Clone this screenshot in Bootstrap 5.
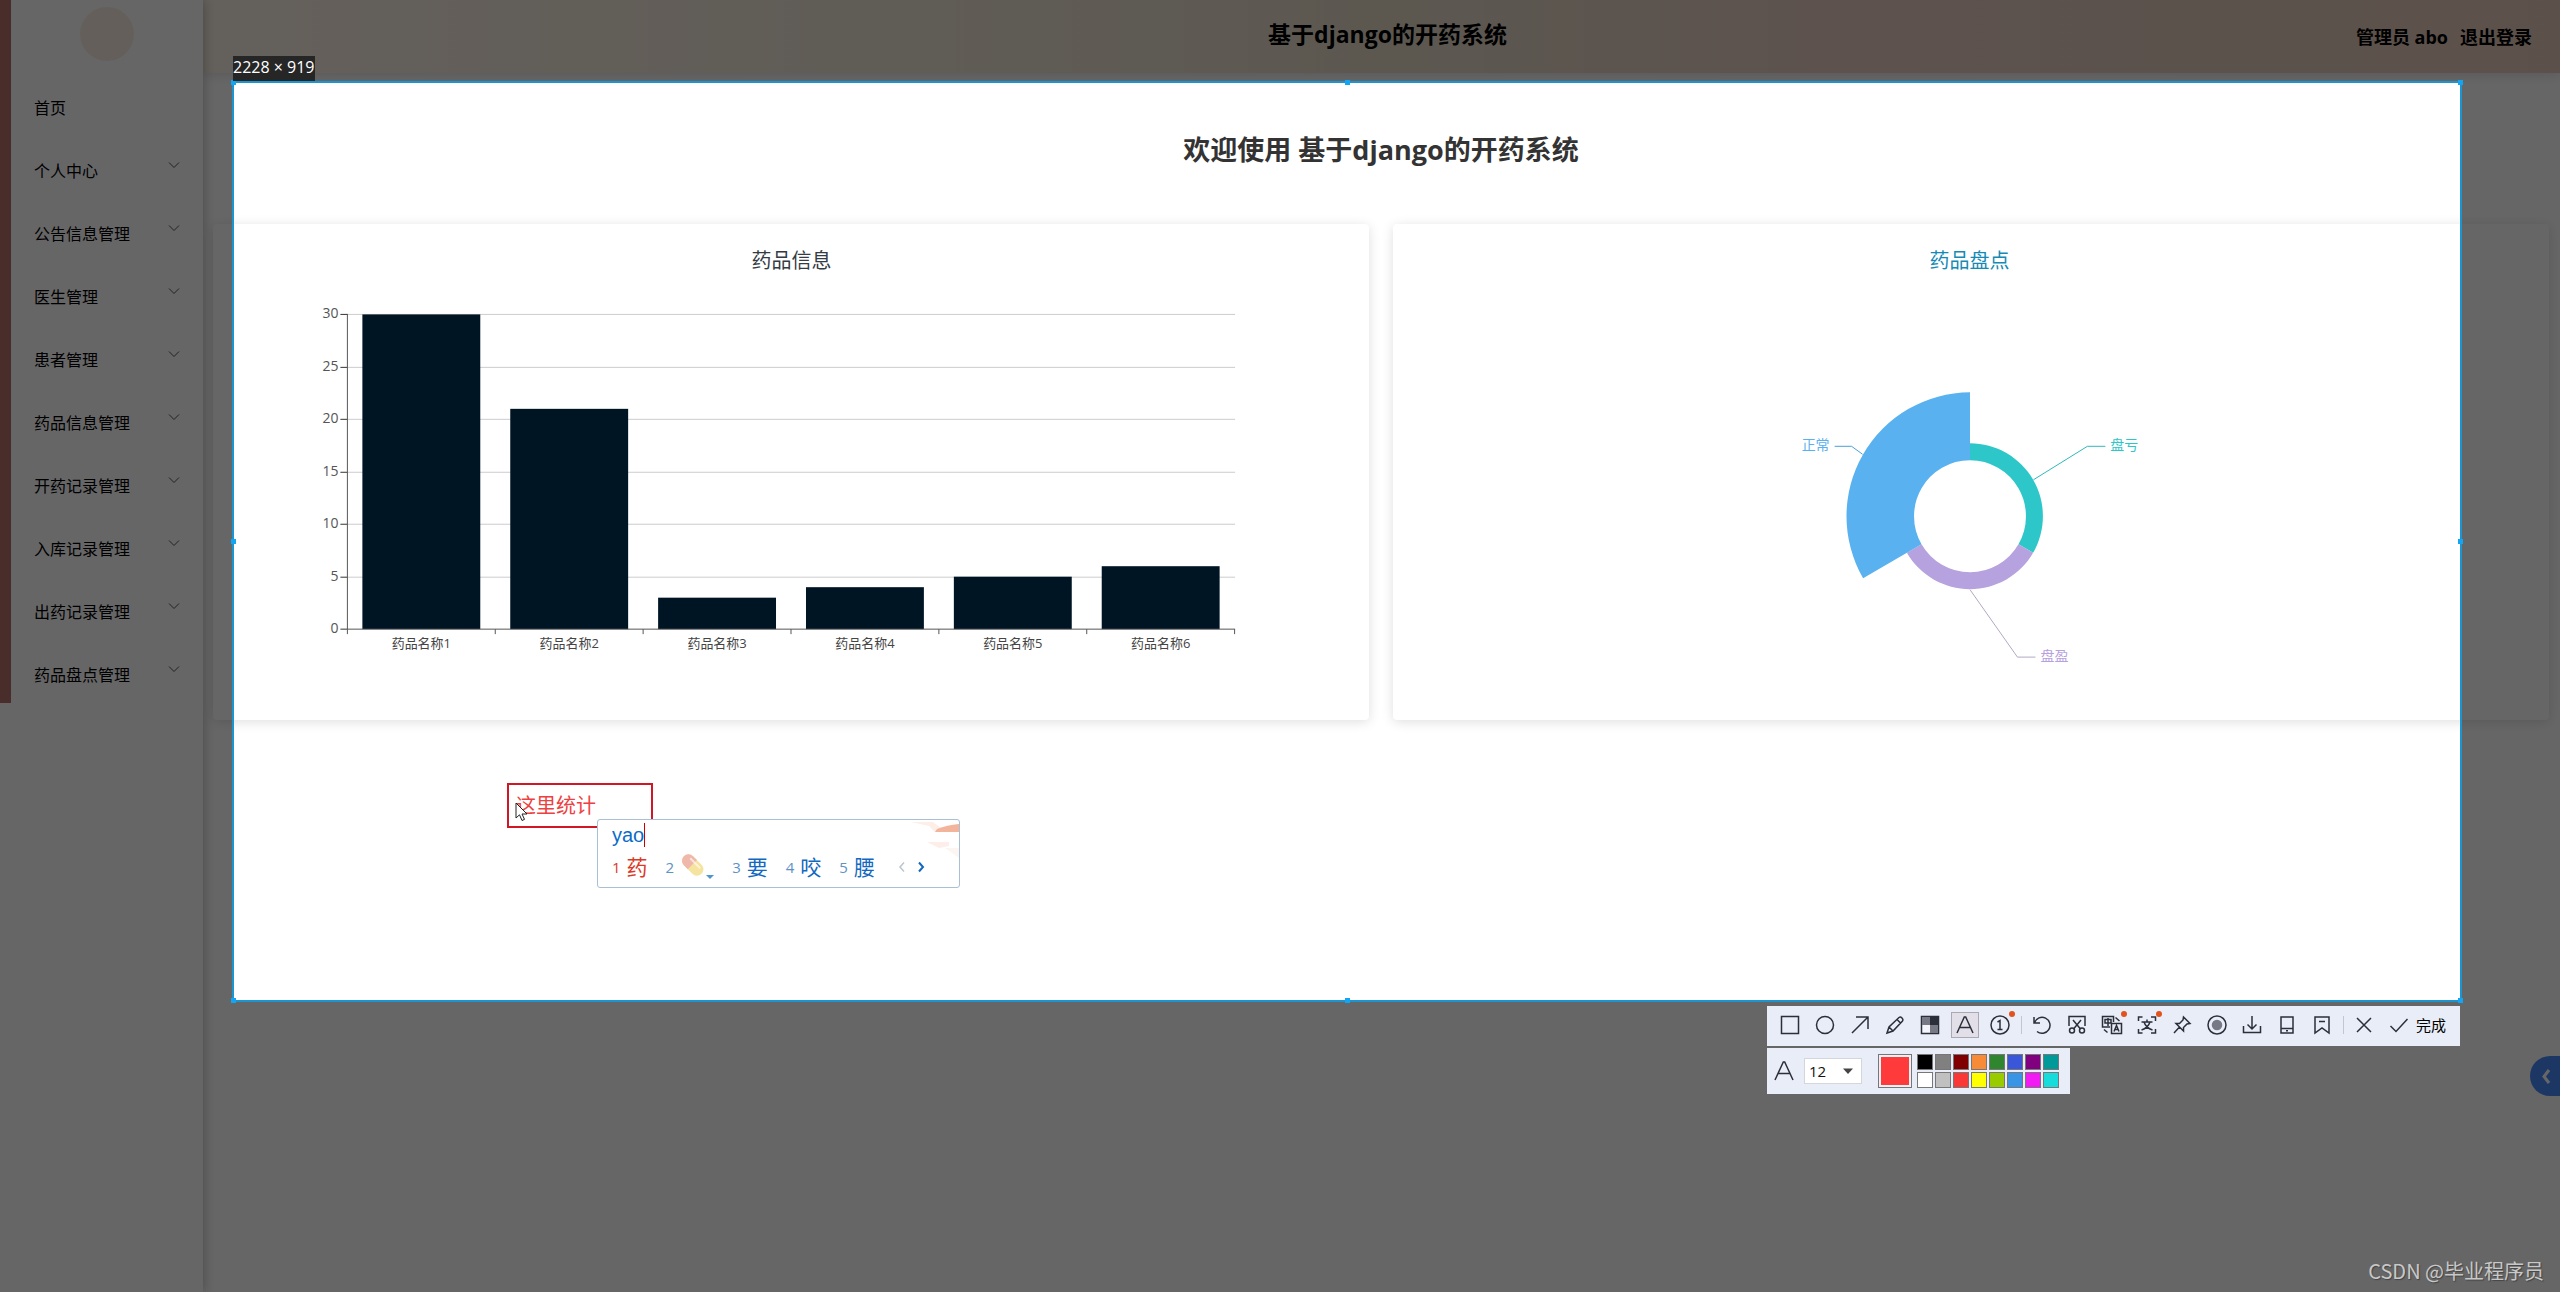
<!DOCTYPE html>
<html lang="zh-CN">
<head>
<meta charset="utf-8">
<meta name="viewport" content="width=device-width, initial-scale=1">
<title>基于django的开药系统</title>
<link rel="stylesheet" href="https://cdn.jsdelivr.net/npm/bootstrap@5.3.0/dist/css/bootstrap.min.css">
<style>
:root{--ink:#2b2f3a;--panel:#e9edf7;--pick:#1c94d2}
body{font-family:"Open Sans","Noto Sans CJK SC",sans-serif;font-size:16px;color:#000;background:#fff;overflow-x:hidden}
svg{display:block}
svg text{font-family:"Open Sans","Noto Sans CJK SC",sans-serif}
.app-shell{min-height:100vh}
.side-panel{width:203px;box-shadow:2px 0 10px rgba(0,0,0,.22);z-index:2}
.side-list{border-left:11px solid #b4726c}
.avatar-box{height:73px;padding-top:7px;margin-left:-1px}
.avatar-dot{width:54px;height:54px;background:#faeee4}
.side-link{height:63px;padding:6px 22px 0 23px;color:#000;text-decoration:none}
.side-link svg{margin-bottom:12px}
.top-bar{height:73px;padding:0 28px;background:linear-gradient(90deg,#fbf0e4 0,#ece2d2 40%,#e6dcc8 50%,#e8cec4 68%,#e6cbba 100%);box-shadow:0 1px 12px rgba(0,0,0,.15)}
.top-title{font-size:23px;line-height:32px;font-weight:700;padding-bottom:5px;padding-left:12px}
.top-user{font-size:18px;font-weight:700;line-height:28px}
.top-user a{color:#000;text-decoration:none}
.work-area{padding:57px 11px 0 10px}
.welcome-title{font-size:27px;font-weight:700;line-height:40px;color:#333;margin-bottom:54px}
.chart-card{border:0;border-radius:4px;box-shadow:0 2px 12px rgba(0,0,0,.13)}
.side-tab{position:absolute;right:0;top:1056px;width:30px;height:40px;border:0;border-radius:20px 0 0 20px;background:#4a8afc;padding:0 0 0 6px}
/* capture overlay */
.capture-box{position:absolute;left:233px;right:99px;top:82px;height:919px;outline:2px solid var(--pick);outline-offset:-1px;box-shadow:0 0 0 4000px rgba(0,0,0,.6);z-index:5}
.grip{position:absolute;width:5px;height:5px;background:#12a5f4}
.g-l{left:-2px}.g-r{right:-2px}.g-t{top:-2px}.g-b{bottom:-2px}
.g-x{left:0;right:0;margin:0 auto}.g-y{top:0;bottom:0;margin:auto 0}
.size-tag{position:absolute;left:0;bottom:100%;margin-bottom:1px;height:25px;line-height:22px;background:#262626;color:#fff;font-size:16px;white-space:nowrap}
.note-box{position:absolute;left:274px;top:701px;width:146px;height:45px;border:2px solid #cf1726}
.note-box input{width:100%;height:39px;border:0;padding:0 0 0 7px;background:transparent;color:#ee3f41;font-size:20px;outline:0}
.pointer{position:absolute;left:282px;top:720px}
.ime-box{position:absolute;left:364px;top:737px;width:363px;height:69px;background:#fff;border:1px solid #a9bfd4;border-radius:3px;padding:0 0 0 14px;font-size:21px;line-height:30px;color:#0a6cc8;overflow:hidden}
.ime-typed{font-family:"Liberation Sans",sans-serif;font-size:20px}
.ime-caret{width:1px;height:24px;background:#c00}
.ime-row{gap:18px;height:34px}
.ime-row button,.tool-strip button,.swatch-grid button{border:0;background:none;padding:0}
.ime-row button{color:#1268c0;display:flex;align-items:center;gap:6px}
.ime-row small{font-size:15px;color:#5d92c8}
.ime-row .first-pick,.ime-row .first-pick small{color:#dc3a28}
.ime-row .page-prev{margin-left:5px}
.ime-row .page-next{margin-left:-7px}
.ime-art{position:absolute;right:0;top:0}
.tool-dock{position:absolute;right:1px;top:100%;margin-top:5px;width:693px}
.tool-strip{height:40px;background:var(--panel);padding:0 14px 2px 9px}
.tool-strip button{width:28px;height:26px;position:relative;margin-right:7px;display:flex;align-items:center;justify-content:center;flex:none}
.tool-strip button.picked{background:#e2dfe8;border:1px solid #aaa9b2}
.tool-strip svg,.letter-a{fill:none;stroke:var(--ink);stroke-width:1.5}
.tool-strip button.has-dot::after{content:"";position:absolute;right:-1px;top:-1px;width:6px;height:6px;border-radius:50%;background:#e2521c}
.bar-rule{width:1px;height:18px;background:#c3c6d0;margin-right:6px;flex:none}
.tool-strip .done-btn{width:auto;gap:7px;margin:0 0 0 4px;font-size:15px;color:#000}
.style-strip{width:303px;height:46px;margin-top:2px;background:var(--panel);padding-left:7px}
.size-pick{width:58px;height:26px;margin-left:10px;border:1px solid #d4d6de;background:#fff;appearance:none;font-size:15px;padding:0 4px;border-radius:0;color:#111}
.size-wrap{position:relative}
.size-wrap svg{position:absolute;right:8px;top:9px;pointer-events:none}
.now-color{width:34px;height:34px;margin-left:16px;border:1px solid #777;background:#ff3a3a;box-shadow:inset 0 0 0 2px #eef0f8}
.swatch-grid{display:grid;grid-template-columns:repeat(8,16px);gap:2px;margin-left:5px}
.swatch-grid button{width:16px;height:16px;border:1px solid #777}
.c1{background:#000!important}.c2{background:#808080!important}.c3{background:#800000!important}.c4{background:#f88b38!important}.c5{background:#2f862f!important}.c6{background:#3957d8!important}.c7{background:#800080!important}.c8{background:#009999!important}
.d1{background:#fff!important}.d2{background:#c0c0c0!important}.d3{background:#fb3838!important}.d4{background:#ff0!important}.d5{background:#9c0!important}.d6{background:#3894e4!important}.d7{background:#f31bf3!important}.d8{background:#16dcdc!important}
.site-mark{position:absolute;right:16px;bottom:6px;font-family:"Noto Sans CJK SC",sans-serif;font-size:20px;line-height:30px;color:#c8c8c8;text-shadow:1px 1px 1px #444;z-index:6}
</style>
</head>
<body>
<div class="app-shell d-flex position-relative overflow-hidden">
  <aside class="side-panel flex-shrink-0 bg-white position-relative">
    <div class="side-list">
      <div class="avatar-box d-flex justify-content-center"><div class="avatar-dot rounded-circle"></div></div>
      <nav class="d-flex flex-column" id="menu">
        <a class="side-link d-flex align-items-center justify-content-between" href="#">首页</a>
      </nav>
    </div>
  </aside>

  <div class="flex-grow-1">
    <header class="top-bar d-flex align-items-center">
      <div class="col"></div>
      <div class="top-title">基于django的开药系统</div>
      <div class="col top-user d-flex justify-content-end gap-2"><span>管理员 abo</span><a href="#" class="ms-1">退出登录</a></div>
    </header>
    <main class="work-area">
      <h1 class="welcome-title text-center">欢迎使用 基于django的开药系统</h1>
      <div class="row gx-4">
        <div class="col-6"><div class="card chart-card">
          <svg viewBox="0 0 1157 496" width="100%" role="img" aria-label="药品信息" id="bars">
            <text x="579" y="44" font-size="20" fill="#333b44" text-anchor="middle">药品信息</text>
          </svg>
        </div></div>
        <div class="col-6"><div class="card chart-card">
          <svg viewBox="0 0 1157 496" width="100%" role="img" aria-label="药品盘点">
            <text x="577" y="44" font-size="20" fill="#158ab5" text-anchor="middle">药品盘点</text>
            <g transform="translate(1 0)">
            <path fill="#2ec7c9" d="M576.500 219.500A73 73 0 0 1 639.700 329L625 320.500A56 56 0 0 0 576.500 236.500Z"/>
            <path fill="#b6a2de" d="M639.700 329A73 73 0 0 1 513.300 329L528 320.500A56 56 0 0 0 625 320.500Z"/>
            <path fill="#5ab1ef" d="M469.500 354.500A124 124 0 0 1 576.500 168.500V236.500A56 56 0 0 0 528 320.500Z"/>
            <g fill="none" stroke-width="1">
              <path stroke="#2eb9bb" d="M640 256L694 222.500H712"/>
              <path stroke="#4a9fd8" d="M469 230.500L458 222.500H441"/>
              <path stroke="#b3a8c4" d="M576.500 366L624 433.500H642"/>
            </g>
            <g font-size="14">
              <text x="717" y="226" fill="#2ec7c9">盘亏</text>
              <text x="408" y="226" fill="#5ab1ef">正常</text>
              <text x="647" y="437" fill="#b6a2de">盘盈</text>
            </g>
            </g>
          </svg>
        </div></div>
      </div>
    </main>
  </div>

  <button class="side-tab" aria-label="展开"><svg width="20" height="20" viewBox="0 0 20 20" fill="none" stroke="#fff" stroke-width="3"><path d="M13 4L8 10.500L13 17"/></svg></button>

  <section class="capture-box">
    <i class="grip g-l g-t"></i><i class="grip g-x g-t"></i><i class="grip g-r g-t"></i><i class="grip g-l g-y"></i><i class="grip g-r g-y"></i><i class="grip g-l g-b"></i><i class="grip g-x g-b"></i><i class="grip g-r g-b"></i>
    <div class="size-tag">2228 × 919</div>
    <div class="note-box"><input type="text" value="这里统计" aria-label="标注文字"></div>
    <svg class="pointer" width="14" height="20" viewBox="0 0 14 20"><path d="M1 1V16L4.500 12.800L7 18.500L9.500 17.400L7 12H12Z" fill="#fff" stroke="#222" stroke-width="1"/></svg>
    <div class="ime-box">
      <svg class="ime-art" width="48" height="40" viewBox="0 0 48 40"><path d="M0 2H22L30 8L48 4V12H24L18 6Z" fill="#fdeee8"/><path d="M26 9Q36 5 48 4V12H24Z" fill="#f3b49c"/><path d="M16 22H38V26L28 28Z" fill="#fdeee9"/><path d="M34 28H48V38Z" fill="#fdf5f1"/></svg>
      <div class="d-flex align-items-center ime-typed"><span>yao</span><i class="ime-caret"></i></div>
      <div class="ime-row d-flex align-items-center">
        <button class="first-pick"><small>1</small>药</button>
        <button aria-label="药丸"><small>2</small><svg width="34" height="28" viewBox="0 0 34 28"><g transform="rotate(45 12 12)"><rect x="0" y="5" width="25" height="13" rx="6.500" fill="#f5e3a0"/><path d="M12 5H6.500A6.500 6.500 0 0 0 6.500 18H12Z" fill="#f0b8aa"/><path d="M6 8.500H20" stroke="#fff" stroke-opacity=".6" stroke-width="2"/></g><path d="M26 22H34L30 26Z" fill="#4f93cf"/></svg></button>
        <button><small>3</small>要</button>
        <button><small>4</small>咬</button>
        <button><small>5</small>腰</button>
        <button class="page-prev" aria-label="上一页"><svg width="8" height="12" viewBox="0 0 8 12" fill="none" stroke="#bcc5ce" stroke-width="1.500"><path d="M6 1.500L2 6L6 10.500"/></svg></button>
        <button class="page-next" aria-label="下一页"><svg width="8" height="12" viewBox="0 0 8 12" fill="none" stroke="#1268c0" stroke-width="2"><path d="M2 1.500L6 6L2 10.500"/></svg></button>
      </div>
    </div>

    <div class="tool-dock">
      <div class="tool-strip d-flex align-items-center">
        <button aria-label="矩形"><svg width="20" height="20"><rect x="1.500" y="1.500" width="17" height="17"/></svg></button>
        <button aria-label="椭圆"><svg width="20" height="20"><circle cx="10" cy="10" r="8.500"/></svg></button>
        <button aria-label="箭头"><svg width="20" height="20"><path d="M2 18L18 2M6 2H18V14"/></svg></button>
        <button aria-label="画笔"><svg width="20" height="20"><path d="M2 18L4 12L14 2.500Q15.500 1.500 17 3T17.500 6L8 16ZM12 4.500L15.500 8M4 12L8 16"/></svg></button>
        <button aria-label="马赛克"><svg width="20" height="20"><rect x="1.500" y="1.500" width="17" height="17" fill="#f4f5fa"/><path d="M10 2H18V10H10Z" fill="#2b2f3a" stroke="none"/><path d="M2 2H10V10H2ZM10 10H18V18H10Z" fill="#777a84" stroke="none"/></svg></button>
        <button class="picked" aria-label="文字"><svg width="20" height="20"><path d="M2 18L9.300 2H10.700L18 18M5 12.500H15"/></svg></button>
        <button class="has-dot" aria-label="序号"><svg width="20" height="20"><circle cx="10" cy="10" r="9"/><path d="M7.500 7L10 5.500V14M7.500 14.500H12.500"/></svg></button>
        <i class="bar-rule"></i>
        <button aria-label="撤销"><svg width="20" height="20"><path d="M2 2V8H8M2.500 7.500A8 8 0 1 1 5 16.500"/></svg></button>
        <button aria-label="裁剪"><svg width="20" height="20"><path d="M2 11V1.500H18V11M6 5L13.500 14M14 5L6.500 14"/><circle cx="5" cy="15.500" r="2.500"/><circle cx="15" cy="15.500" r="2.500"/></svg></button>
        <button class="has-dot" aria-label="翻译"><svg width="22" height="20"><path d="M9 12H1.500V1.500H12.500V7M4 4.500H10V8H4ZM7 3V11M10.500 8.500H20.500V18.500H10.500ZM13 16.500L15.500 10.500L18 16.500M14 14.500H17M3 14.500L6.500 17.500M14.500 2.500L18.500 6"/></svg></button>
        <button class="has-dot" aria-label="识别文字"><svg width="20" height="20"><path d="M1.500 6V2H5.500M14 2H18.500V6M18.500 14V18H14M5.500 18H1.500V14M4.500 7H15.500M10 4.500V7M7 7Q9 13 15.500 15M13 7Q11 13 4.500 15"/></svg></button>
        <button aria-label="固定"><svg width="20" height="20"><path d="M11.500 2L18 8.500L15 9L11.500 12.500L11.500 16L4 8.500L7.500 8.500L11 5ZM7.500 12L2 18"/></svg></button>
        <button aria-label="录制"><svg width="20" height="20"><circle cx="10" cy="10" r="9"/><circle cx="10" cy="10" r="4.500" fill="#777984" stroke="#777984"/></svg></button>
        <button aria-label="保存"><svg width="20" height="20"><path d="M1.500 11V17.500H18.500V11M10 1V14M5.500 9.500L10 14L14.500 9.500"/></svg></button>
        <button aria-label="手机"><svg width="20" height="20"><path d="M4 2H16V18H4ZM4 13.500H16M9 15.800H11"/></svg></button>
        <button aria-label="收藏"><svg width="20" height="20"><path d="M3 2H17V18L10 13L3 18ZM7 6.500H13"/></svg></button>
        <i class="bar-rule"></i>
        <button aria-label="关闭"><svg width="20" height="20"><path d="M3 3L17 17M17 3L3 17"/></svg></button>
        <button class="done-btn"><svg width="20" height="20"><path d="M1.500 11L7 16.500L18.500 4"/></svg>完成</button>
      </div>
      <div class="style-strip d-flex align-items-center">
        <svg class="letter-a" width="20" height="22"><path d="M1 20L9.300 2H10.700L19 20M4.500 13.500H15.500"/></svg>
        <div class="size-wrap"><select class="size-pick" aria-label="字号"><option>12</option><option>14</option></select><svg width="12" height="8"><path d="M1 1.500H11L6 7Z" fill="#444"/></svg></div>
        <button class="now-color" aria-label="当前颜色"></button>
        <div class="swatch-grid" id="swatches"></div>
      </div>
    </div>
  </section>
  <div class="site-mark">CSDN @毕业程序员</div>
</div>
<script src="https://cdn.jsdelivr.net/npm/bootstrap@5.3.0/dist/js/bootstrap.bundle.min.js"></script>
<script>
const menu=document.getElementById('menu');
['个人中心','公告信息管理','医生管理','患者管理','药品信息管理','开药记录管理','入库记录管理','出药记录管理','药品盘点管理'].forEach(t=>{
  menu.insertAdjacentHTML('beforeend',`<a class="side-link d-flex align-items-center justify-content-between" href="#">${t}<svg width="14" height="8" viewBox="0 0 14 8" fill="none" stroke="#555"><path d="M2 1.500L7 6.500L12 1.500"/></svg></a>`);
});
const values=[30,21,3,4,5,6],x0=134.5,y0=405.5,step=52.5,slot=148;
let s='';
for(let i=0;i<=6;i++){
  const y=Math.round(y0-i*step-.5)+.5;
  if(i)s+=`<path d="M${x0} ${y}H1023" stroke="#ccc"/>`;
  s+=`<path d="M${x0-7} ${y}H${x0}" stroke="#333"/><text x="${x0-9}" y="${y+4}" font-size="14" fill="#555" text-anchor="end">${i*5}</text>`;
}
values.forEach((v,i)=>{
  const h=v*step/5;
  s+=`<rect x="${149.5+i*slot}" y="${y0-h}" width="118" height="${h}" fill="#001524"/><text x="${x0+slot*(i+.5)}" y="${y0+19}" font-size="13" fill="#444" text-anchor="middle">药品名称${i+1}</text>`;
});
s+=`<path d="M${x0} 90V${y0}H1023" fill="none" stroke="#555"/>`;
for(let i=0;i<=6;i++)s+=`<path d="M${x0+i*slot} ${y0}v5" stroke="#555"/>`;
document.getElementById('bars').insertAdjacentHTML('beforeend',s);
const names=['黑','灰','深红','橙','绿','蓝','紫','青','白','浅灰','红','黄','黄绿','天蓝','品红','浅青'];
document.getElementById('swatches').innerHTML=names.map((n,i)=>`<button class="${i<8?'c'+(i+1):'d'+(i-7)}" aria-label="${n}"></button>`).join('');
</script>
</body>
</html>
